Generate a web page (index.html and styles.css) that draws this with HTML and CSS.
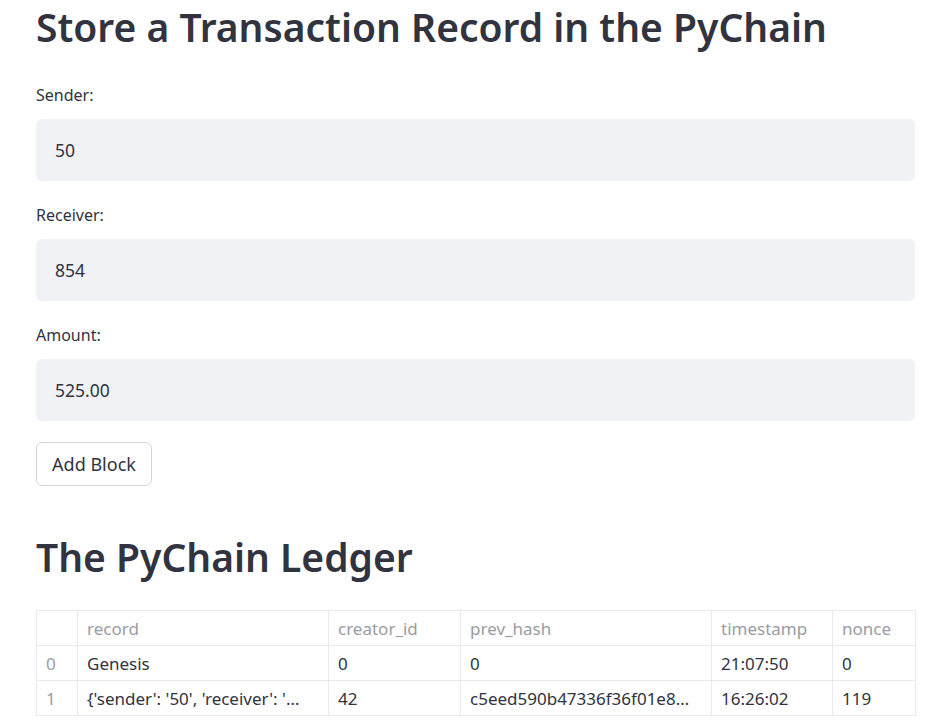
FILE: index.html
```html
<!DOCTYPE html>
<html lang="en">
<head>
<meta charset="utf-8">
<title>PyChain</title>
<link rel="stylesheet" href="styles.css">
</head>
<body>
<main class="page">
  <h1 class="title">Store a Transaction Record in the PyChain</h1>
  <div class="form">
    <div class="field">
      <label class="field-label">Sender:</label>
      <div class="input">50</div>
    </div>
    <div class="field">
      <label class="field-label">Receiver:</label>
      <div class="input">854</div>
    </div>
    <div class="field">
      <label class="field-label">Amount:</label>
      <div class="input">525.00</div>
    </div>
  </div>
  <button class="btn">Add Block</button>
  <h2 class="ledger-title">The PyChain Ledger</h2>
  <table class="ledger">
    <colgroup>
      <col class="c-idx"><col class="c-record"><col class="c-creator"><col class="c-hash"><col class="c-time"><col class="c-nonce">
    </colgroup>
    <thead>
      <tr><th></th><th>record</th><th>creator_id</th><th>prev_hash</th><th>timestamp</th><th>nonce</th></tr>
    </thead>
    <tbody>
      <tr><td class="idx">0</td><td>Genesis</td><td>0</td><td>0</td><td>21:07:50</td><td>0</td></tr>
      <tr><td class="idx">1</td><td>{'sender': '50', 'receiver': '…</td><td>42</td><td>c5eed590b47336f36f01e8…</td><td>16:26:02</td><td>119</td></tr>
    </tbody>
  </table>
</main>
</body>
</html>
```
FILE: styles.css
```css
html, body {
  margin: 0;
  padding: 0;
  background: #ffffff;
}
body {
  font-family: "Noto Sans", "Open Sans", sans-serif;
  color: #31333f;
}
.page {
  width: 879px;
  padding-left: 36px;
  display: flex;
  flex-direction: column;
  align-items: flex-start;
}
.title {
  margin: 0;
  font-size: 39px;
  line-height: 54px;
  font-weight: 600;
  color: #31333f;
  white-space: nowrap;
}
.form {
  margin-top: 31px;
  width: 100%;
  display: flex;
  flex-direction: column;
  gap: 24px;
}
.field {
  display: flex;
  flex-direction: column;
  gap: 14px;
}
.field-label {
  font-size: 16px;
  line-height: 20px;
  color: #31333f;
}
.input {
  height: 62px;
  box-sizing: border-box;
  background: #f0f2f6;
  border-radius: 6px;
  padding-left: 19px;
  display: flex;
  align-items: center;
  font-size: 17.5px;
  color: #31333f;
}
.btn {
  margin-top: 21px;
  width: 116px;
  height: 44px;
  background: #ffffff;
  border: 1px solid #d6d6d9;
  border-radius: 6px;
  font-family: inherit;
  font-size: 18px;
  color: #31333f;
  padding: 0;
}
.ledger-title {
  margin: 44px 0 0 0;
  font-size: 39px;
  line-height: 54px;
  font-weight: 600;
  color: #31333f;
}
.ledger {
  margin-top: 26px;
  width: 879px;
  border-collapse: collapse;
  table-layout: fixed;
  font-size: 17px;
}
.c-idx { width: 41px; }
.c-record { width: 251px; }
.c-creator { width: 132px; }
.c-hash { width: 251px; }
.c-time { width: 121px; }
.c-nonce { width: 83px; }
.ledger th, .ledger td {
  border: 1px solid #e6e9ef;
  height: 35px;
  padding: 0 9px;
  text-align: left;
  white-space: nowrap;
  overflow: hidden;
  box-sizing: border-box;
}
.ledger th {
  font-weight: 400;
  color: #9b9ca3;
}
.ledger td {
  color: #31333f;
}
.ledger td.idx {
  color: #9b9ca3;
}
```
